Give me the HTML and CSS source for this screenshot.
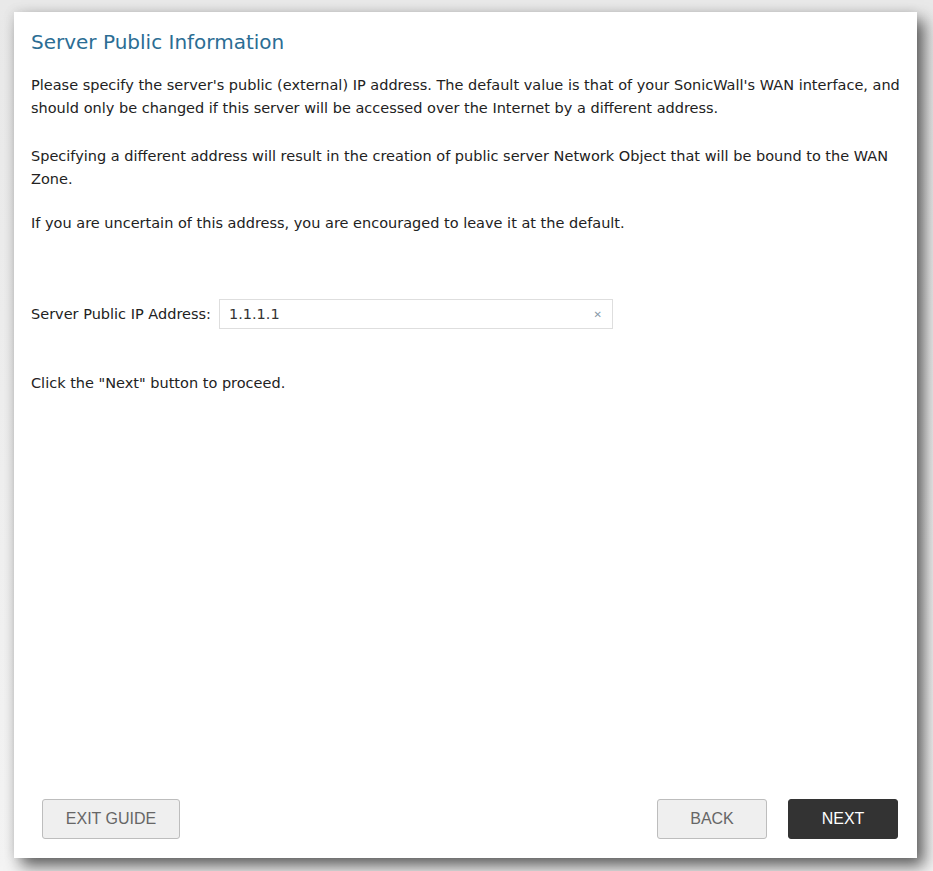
FILE: index.html
```html
<!DOCTYPE html>
<html lang="en">
<head>
<meta charset="utf-8">
<title>Server Public Information</title>
<link rel="stylesheet" href="styles.css">
</head>
<body>
<div class="stage">
  <div class="card">
    <div class="content">
      <h1 class="title">Server Public Information</h1>
      <p class="para p1">Please specify the server's public (external) IP address. The default value is that of your SonicWall's WAN interface, and should only be changed if this server will be accessed over the Internet by a different address.</p>
      <p class="para p2">Specifying a different address will result in the creation of public server Network Object that will be bound to the WAN Zone.</p>
      <p class="para p3">If you are uncertain of this address, you are encouraged to leave it at the default.</p>
      <div class="field">
        <label class="label" for="ip">Server Public IP Address:</label>
        <div class="input-box">
          <input id="ip" class="input" type="text" value="1.1.1.1">
          <span class="clear">&#x2715;</span>
        </div>
      </div>
      <p class="para proceed">Click the "Next" button to proceed.</p>
    </div>
    <div class="footer">
      <button class="btn btn-light">EXIT GUIDE</button>
      <div class="right-btns">
        <button class="btn btn-light btn-back">BACK</button>
        <button class="btn btn-dark">NEXT</button>
      </div>
    </div>
  </div>
</div>
</body>
</html>
```
FILE: styles.css
```css
html, body {
  margin: 0;
  padding: 0;
  background: #ffffff;
}
body {
  width: 933px;
  height: 871px;
  overflow: hidden;
}
.stage {
  padding: 12px 16px 13px 14px;
  height: 871px;
  box-sizing: border-box;
  background: linear-gradient(#e9e9e9, #f4f4f4);
}
.card {
  background: #ffffff;
  height: 846px;
  width: 903px;
  box-shadow: 7px 8px 15px rgba(0,0,0,0.62), -2px -2px 10px rgba(0,0,0,0.06);
  display: flex;
  flex-direction: column;
  font-family: "DejaVu Sans", sans-serif;
  color: #222;
}
.content {
  flex: 1;
  padding: 16px 17px 0 17px;
}
.title {
  margin: 0 0 18px 0;
  font-weight: normal;
  font-size: 20px;
  color: #2b6d94;
  line-height: 28px;
}
.para {
  margin: 0;
  font-size: 14.5px;
  line-height: 23px;
}
.p1 {
  margin-bottom: 25px;
}
.p2 {
  margin-bottom: 21px;
}
.field {
  display: flex;
  align-items: center;
  margin-top: 64px;
  gap: 8px;
}
.label {
  font-size: 14.5px;
}
.input-box {
  display: flex;
  align-items: center;
  padding: 0 10px 0 9px;
  box-sizing: border-box;
  width: 394px;
  height: 30px;
  border: 1px solid #dedede;
}
.input {
  flex: 1;
  border: none;
  outline: none;
  font-family: "DejaVu Sans", sans-serif;
  font-size: 14.5px;
  color: #333;
  padding: 0;
  background: transparent;
}
.clear {
  font-size: 10px;
  color: #8a9aa8;
}
.proceed {
  margin-top: 43px;
}
.footer {
  display: flex;
  justify-content: space-between;
  align-items: center;
  padding: 0 19px 19px 28px;
}
.right-btns {
  display: flex;
  gap: 21px;
}
.btn {
  height: 40px;
  font-family: "Liberation Sans", Arial, sans-serif;
  font-size: 16px;
  border-radius: 3px;
  cursor: pointer;
  padding: 0;
}
.btn-light {
  width: 138px;
  background: #efefef;
  border: 1px solid #bdbdbd;
  color: #666666;
}
.btn-back {
  width: 110px;
}
.btn-dark {
  width: 110px;
  background: #333333;
  border: 1px solid #333333;
  color: #ffffff;
}
```
